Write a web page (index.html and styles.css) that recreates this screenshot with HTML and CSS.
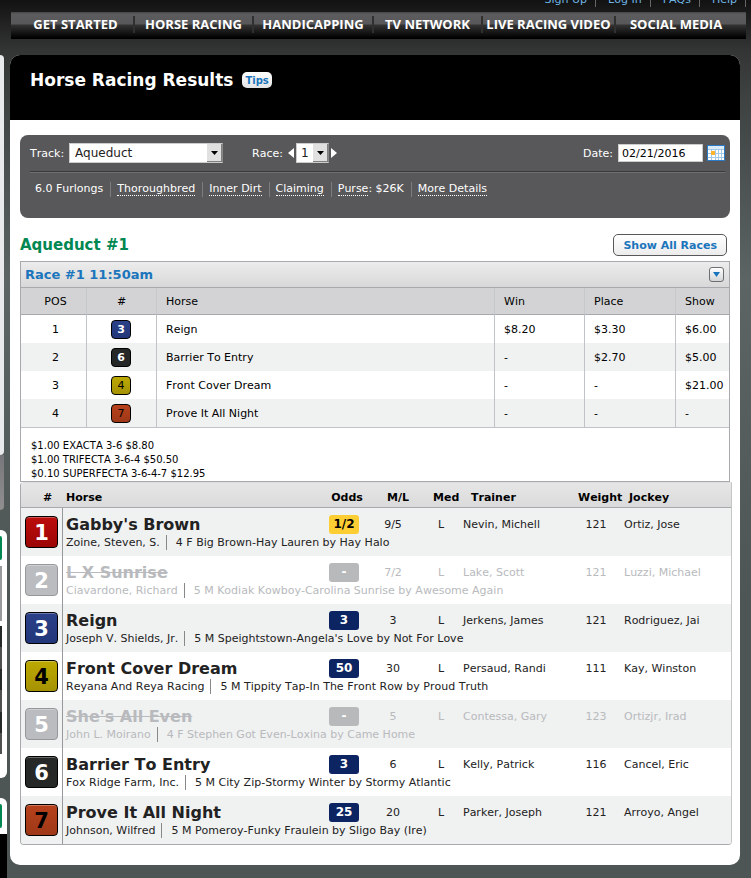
FILE: index.html
```
<!doctype html>
<html lang="en">
<head>
<meta charset="utf-8">
<title>Horse Racing Results</title>
<link rel="stylesheet" href="styles.css">
</head>
<body>
<div class="topLinks">
	<a href="#">Sign Up</a>
	<a href="#">Log In</a>
	<a href="#">FAQs</a>
	<a href="#">Help</a>
</div>

<nav class="nav">
	<a href="#">GET STARTED</a>
	<a href="#">HORSE RACING</a>
	<a href="#">HANDICAPPING</a>
	<a href="#">TV NETWORK</a>
	<a href="#">LIVE RACING VIDEO</a>
	<a href="#">SOCIAL MEDIA</a>
</nav>

<div class="page">
	<div class="side">
		<div class="sideMenu"></div>
		<div class="sideFoot"></div>
		<div class="sideBox">
			<div class="sideHead"></div>
			<div class="sideImage"></div>
			<div class="sideList"></div>
		</div>
		<div class="sideBox sideBoxLast">
			<div class="sideHead"></div>
			<div class="sideVideo"></div>
		</div>
	</div>

	<main class="mainDiv">
		<div class="mainHead">
			<h1>Horse Racing Results</h1>
			<button type="button" class="tips">Tips</button>
		</div>

		<div class="mainBody">
			<form class="filter" name="FilterForm">
				<div class="fields">
					<label for="track">Track:</label>
					<select id="track" name="track" class="select trackSelect">
						<option>Aqueduct</option>
					</select>
					<label for="race" class="raceLabel">Race:</label>
					<button type="button" class="arrow prev" aria-label="Previous race"></button>
					<select id="race" name="race" class="select raceSelect">
						<option>1</option>
					</select>
					<button type="button" class="arrow next" aria-label="Next race"></button>
					<label for="date" class="dateLabel">Date:</label>
					<input type="text" id="date" name="date" class="date" value="02/21/2016">
					<button type="button" class="calendar" aria-label="Calendar">
						<svg width="18" height="16" viewBox="0 0 18 16">
							<rect width="18" height="16" fill="#2a7cc8"/>
							<rect x="1" y="1" width="16" height="3" fill="#dcebf8"/>
							<rect x="1" y="4" width="16" height="11" fill="#fff"/>
							<path d="M1 4.500H17M1 8.500H17M1 12.500H17M4.500 4V15M8.500 4V15M11.500 4V15M14.500 4V15" stroke="#a3c8e8"/>
							<rect x="4" y="6" width="4" height="4" fill="#fcb52b"/>
						</svg>
					</button>
				</div>
				<ul class="details">
					<li>6.0 Furlongs</li>
					<li><a href="#">Thoroughbred</a></li>
					<li><a href="#">Inner Dirt</a></li>
					<li><a href="#">Claiming</a></li>
					<li><a href="#">Purse</a>: $26K</li>
					<li><a href="#">More Details</a></li>
				</ul>
			</form>

			<div class="raceHead">
				<h2>Aqueduct #1</h2>
				<button type="button" class="showAll">Show All Races</button>
			</div>

			<section class="results">
				<div class="resultsTitle">
					<h3>Race #1 11:50am</h3>
					<button type="button" class="toggle" aria-label="Hide race">
						<svg width="7" height="5" viewBox="0 0 7 5"><path d="M0 0H7L3.500 5Z" fill="#1b75bc"/></svg>
					</button>
				</div>
				<table class="resultsTable">
					<thead>
						<tr>
							<th class="pos">POS</th>
							<th class="num">#</th>
							<th>Horse</th>
							<th class="win">Win</th>
							<th class="place">Place</th>
							<th class="show">Show</th>
						</tr>
					</thead>
					<tbody>
						<tr>
							<td class="pos">1</td>
							<td class="num"><span class="saddle blue">3</span></td>
							<td>Reign</td>
							<td>$8.20</td>
							<td>$3.30</td>
							<td>$6.00</td>
						</tr>
						<tr>
							<td class="pos">2</td>
							<td class="num"><span class="saddle black">6</span></td>
							<td>Barrier To Entry</td>
							<td>-</td>
							<td>$2.70</td>
							<td>$5.00</td>
						</tr>
						<tr>
							<td class="pos">3</td>
							<td class="num"><span class="saddle yellow">4</span></td>
							<td>Front Cover Dream</td>
							<td>-</td>
							<td>-</td>
							<td>$21.00</td>
						</tr>
						<tr>
							<td class="pos">4</td>
							<td class="num"><span class="saddle orange">7</span></td>
							<td>Prove It All Night</td>
							<td>-</td>
							<td>-</td>
							<td>-</td>
						</tr>
					</tbody>
				</table>
				<ul class="payouts">
					<li>$1.00 EXACTA 3-6 $8.80</li>
					<li>$1.00 TRIFECTA 3-6-4 $50.50</li>
					<li>$0.10 SUPERFECTA 3-6-4-7 $12.95</li>
				</ul>
			</section>

			<div class="entries">
				<table class="entriesTable">
					<thead>
						<tr>
							<th class="no">#</th>
							<th class="name">Horse</th>
							<th class="odds">Odds</th>
							<th class="ml">M/L</th>
							<th class="med">Med</th>
							<th class="trainer">Trainer</th>
							<th class="weight">Weight</th>
							<th class="jockey">Jockey</th>
						</tr>
					</thead>
					<tbody>
						<tr class="entry">
							<td class="no" rowspan="2"><span class="saddle big red">1</span></td>
							<td class="name">Gabby's Brown</td>
							<td class="odds"><span class="badge favorite">1/2</span></td>
							<td class="ml">9/5</td>
							<td class="med">L</td>
							<td class="trainer">Nevin, Michell</td>
							<td class="weight">121</td>
							<td class="jockey">Ortiz, Jose</td>
						</tr>
						<tr class="info">
							<td colspan="7"><span class="owner">Zoine, Steven, S.</span>4 F Big Brown-Hay Lauren by Hay Halo</td>
						</tr>
					</tbody>
					<tbody class="scratched">
						<tr class="entry">
							<td class="no" rowspan="2"><span class="saddle big gray">2</span></td>
							<td class="name">L X Sunrise</td>
							<td class="odds"><span class="badge">-</span></td>
							<td class="ml">7/2</td>
							<td class="med">L</td>
							<td class="trainer">Lake, Scott</td>
							<td class="weight">121</td>
							<td class="jockey">Luzzi, Michael</td>
						</tr>
						<tr class="info">
							<td colspan="7"><span class="owner">Ciavardone, Richard</span>5 M Kodiak Kowboy-Carolina Sunrise by Awesome Again</td>
						</tr>
					</tbody>
					<tbody>
						<tr class="entry">
							<td class="no" rowspan="2"><span class="saddle big blue">3</span></td>
							<td class="name">Reign</td>
							<td class="odds"><span class="badge">3</span></td>
							<td class="ml">3</td>
							<td class="med">L</td>
							<td class="trainer">Jerkens, James</td>
							<td class="weight">121</td>
							<td class="jockey">Rodriguez, Jai</td>
						</tr>
						<tr class="info">
							<td colspan="7"><span class="owner">Joseph V. Shields, Jr.</span>5 M Speightstown-Angela's Love by Not For Love</td>
						</tr>
					</tbody>
					<tbody>
						<tr class="entry">
							<td class="no" rowspan="2"><span class="saddle big yellow">4</span></td>
							<td class="name">Front Cover Dream</td>
							<td class="odds"><span class="badge">50</span></td>
							<td class="ml">30</td>
							<td class="med">L</td>
							<td class="trainer">Persaud, Randi</td>
							<td class="weight">111</td>
							<td class="jockey">Kay, Winston</td>
						</tr>
						<tr class="info">
							<td colspan="7"><span class="owner">Reyana And Reya Racing</span>5 M Tippity Tap-In The Front Row by Proud Truth</td>
						</tr>
					</tbody>
					<tbody class="scratched">
						<tr class="entry">
							<td class="no" rowspan="2"><span class="saddle big gray">5</span></td>
							<td class="name">She's All Even</td>
							<td class="odds"><span class="badge">-</span></td>
							<td class="ml">5</td>
							<td class="med">L</td>
							<td class="trainer">Contessa, Gary</td>
							<td class="weight">123</td>
							<td class="jockey">Ortizjr, Irad</td>
						</tr>
						<tr class="info">
							<td colspan="7"><span class="owner">John L. Moirano</span>4 F Stephen Got Even-Loxina by Came Home</td>
						</tr>
					</tbody>
					<tbody>
						<tr class="entry">
							<td class="no" rowspan="2"><span class="saddle big black">6</span></td>
							<td class="name">Barrier To Entry</td>
							<td class="odds"><span class="badge">3</span></td>
							<td class="ml">6</td>
							<td class="med">L</td>
							<td class="trainer">Kelly, Patrick</td>
							<td class="weight">116</td>
							<td class="jockey">Cancel, Eric</td>
						</tr>
						<tr class="info">
							<td colspan="7"><span class="owner">Fox Ridge Farm, Inc.</span>5 M City Zip-Stormy Winter by Stormy Atlantic</td>
						</tr>
					</tbody>
					<tbody>
						<tr class="entry">
							<td class="no" rowspan="2"><span class="saddle big orange">7</span></td>
							<td class="name">Prove It All Night</td>
							<td class="odds"><span class="badge">25</span></td>
							<td class="ml">20</td>
							<td class="med">L</td>
							<td class="trainer">Parker, Joseph</td>
							<td class="weight">121</td>
							<td class="jockey">Arroyo, Angel</td>
						</tr>
						<tr class="info">
							<td colspan="7"><span class="owner">Johnson, Wilfred</span>5 M Pomeroy-Funky Fraulein by Sligo Bay (Ire)</td>
						</tr>
					</tbody>
				</table>
			</div>
		</div>
	</main>
</div>
</body>
</html>
```
FILE: styles.css
```
* {
	box-sizing: border-box;
}
body {
	margin: 0;
	background: #4d5655 linear-gradient(#121212, #333534 50px, #3e4342 100px, #5c6564 280px, #4d5655 600px) no-repeat;
	color: #000;
	font-family: Verdana, "DejaVu Sans", sans-serif;
	font-size: 11px;
	font-kerning: none;
}
h1, h2, h3, ul {
	margin: 0;
	padding: 0;
}
ul {
	list-style: none;
}
button {
	padding: 0;
	font-family: inherit;
	cursor: pointer;
}

/* top links, the bar is scrolled mostly out of view */
.topLinks {
	display: flex;
	justify-content: flex-end;
	align-items: flex-end;
	height: 12px;
	padding: 0 5px 5px 0;
	overflow: hidden;
}
.topLinks a {
	padding: 0 8px 0 12px;
	border-right: 1px solid #666;
	color: #6fb4e4;
	line-height: 14px;
	text-decoration: none;
}

/* navigation */
.nav {
	display: grid;
	grid-template-columns: 117fr 119fr 120fr 109fr 133fr 120fr;
	margin: 0 5px 16px 11px;
	padding: 0 10px 0 7px;
	background: linear-gradient(#444, #5c5c5e 2px, #58585a 12px, #333 13px, #000 26px);
}
.nav a {
	margin: 4px 0 6px;
	border-right: 2px solid #303030;
	color: #fff;
	font-family: "Open Sans", sans-serif;
	font-size: 13px;
	font-weight: bold;
	line-height: 17px;
	text-align: center;
	text-decoration: none;
	white-space: nowrap;
}
.nav a:last-child {
	border-right: 0;
}

.page {
	display: grid;
	grid-template-columns: 7px 1fr;
	column-gap: 3px;
	padding-right: 11px;
}

/* left column */
.side {
	display: flex;
	flex-direction: column;
}
.sideMenu {
	width: 4px;
	height: 400px;
	border-radius: 0 4px 4px 0;
	background: #e8eaec;
}
.sideFoot {
	width: 4px;
	height: 55px;
	margin-bottom: 20px;
	border-radius: 0 0 4px 0;
	background: linear-gradient(#77767a, #918f90);
}
.sideBox {
	height: 248px;
	margin-bottom: 20px;
	padding: 6px 0;
	border-radius: 0 6px 6px 0;
	background: #fff;
}
.sideHead {
	width: 2px;
	height: 24px;
	margin-bottom: 6px;
	border-radius: 0 3px 3px 0;
	background: #008752;
}
.sideImage {
	width: 2px;
	height: 55px;
	margin-bottom: 5px;
	background: #9a999e;
}
.sideList {
	width: 2px;
	height: 128px;
	background: repeating-linear-gradient(#252a29 0 21px, #505050 21px 43px);
}
.sideBoxLast {
	height: 80px;
	margin-bottom: 0;
	padding-bottom: 0;
	border-radius: 0 6px 0 0;
}
.sideVideo {
	height: 44px;
	background: #000;
}

/* main panel */
.mainDiv {
	margin-bottom: 13px;
	border-radius: 10px;
	background: #fff;
	overflow: hidden;
}
.mainHead {
	display: flex;
	align-items: flex-start;
	gap: 9px;
	height: 65px;
	padding: 14px 20px 0;
	background: #000;
}
h1 {
	color: #fff;
	font-size: 17px;
	line-height: 22px;
}
.tips {
	height: 16px;
	margin-top: 3px;
	padding: 0 3px;
	border: 0;
	border-radius: 5px;
	background: linear-gradient(#fff, #e2e3e4);
	color: #1b75bc;
	font-size: 10px;
	font-weight: bold;
}
.mainBody {
	padding: 15px 8px 20px 10px;
}

/* filter */
.filter {
	margin-right: 2px;
	padding: 8px 5px 21px 10px;
	border-radius: 8px;
	background: #58585a;
	color: #fff;
}
.fields {
	display: flex;
	align-items: center;
	height: 29px;
	padding-bottom: 8px;
	border-bottom: 1px solid #3a3a3b;
}
.select {
	height: 20px;
	margin: 0;
	padding: 0 18px 0 5px;
	border: 1px solid #ccc;
	border-right-color: #888;
	border-radius: 0;
	background: #fff url("data:image/svg+xml,%3Csvg xmlns='http://www.w3.org/2000/svg' width='15' height='18'%3E%3Cpath d='M0 0H15V18H0Z' fill='%23808080'/%3E%3Cpath d='M0 0H14V17H0Z' fill='%23e0e0e0'/%3E%3Cpath d='M4 7H11L7.500 11Z'/%3E%3C/svg%3E") no-repeat right top;
	color: #222;
	font-family: inherit;
	font-size: 12px;
	appearance: none;
}
.trackSelect {
	width: 154px;
	margin-left: 5px;
}
.raceLabel {
	margin-left: 29px;
}
.raceSelect {
	width: 33px;
	padding-left: 4px;
}
.arrow {
	width: 6px;
	height: 10px;
	border: 0;
	background: #fff;
}
.prev {
	margin: 0 2px 0 5px;
	clip-path: polygon(100% 0, 100% 100%, 0 50%);
}
.next {
	margin-left: 2px;
	clip-path: polygon(0 0, 100% 50%, 0 100%);
}
.dateLabel {
	margin-left: auto;
}
.date {
	width: 85px;
	height: 18px;
	margin: 0 4px 0 5px;
	padding: 0 3px;
	border: 1px solid #ccc;
	background: #fff;
	color: #000;
	font-family: inherit;
	font-size: 11px;
}
.calendar {
	height: 16px;
	border: 0;
	background: none;
}
.calendar svg {
	display: block;
}
.details {
	display: flex;
	padding: 9px 0 0 5px;
	border-top: 1px solid #707072;
}
.details li {
	height: 15px;
	margin-right: 6px;
	padding-right: 7px;
	border-right: 1px solid #7c7c7e;
	line-height: 13px;
}
.details li:last-child {
	border-right: 0;
}
.details a {
	display: inline-block;
	border-bottom: 1px dotted #fff;
	color: #fff;
	text-decoration: none;
}

.raceHead {
	display: flex;
	justify-content: space-between;
	align-items: center;
	padding: 16px 5px 5px 0;
}
h2 {
	color: #008752;
	font-size: 15px;
	line-height: 18px;
}
.showAll {
	height: 22px;
	padding: 0 9px;
	border: 1px solid #58585a;
	border-radius: 5px;
	background: linear-gradient(#fff, #ececec);
	color: #1b75bc;
	font-size: 11px;
	font-weight: bold;
}

/* saddle cloth numbers */
.saddle {
	display: block;
	width: 20px;
	height: 19px;
	margin: 0 auto;
	border: 1px solid #000;
	border-radius: 4px;
	color: #fff;
	font-size: 11px;
	font-weight: bold;
	line-height: 17px;
	text-align: center;
}
.big {
	width: 33px;
	height: 32px;
	font-size: 21px;
	line-height: 32px;
	box-shadow: inset 0 1px rgba(255, 255, 255, 0.3);
}
.red {
	background: linear-gradient(#bb0d0b, #9c0606);
}
.blue {
	background: linear-gradient(#2a4088, #22377a);
}
.black {
	background: #262727;
}
.yellow {
	background: linear-gradient(#bca900, #a59203);
	color: #000;
}
.orange {
	background: linear-gradient(#b6411c, #9f3817);
	color: #000;
}
.gray {
	border-color: #97989b;
	background: #bbbcc0;
}
.resultsTable .yellow, .resultsTable .orange {
	font-weight: normal;
}

/* results */
.results {
	margin-right: 2px;
	border: 1px solid #a7a9ac;
}
.resultsTitle {
	display: flex;
	justify-content: space-between;
	align-items: center;
	height: 26px;
	padding: 0 5px 0 4px;
	border-bottom: 1px solid #a7a9ac;
	background: linear-gradient(#ececec, #d8d8d8);
}
h3 {
	color: #1b75bc;
	font-size: 13px;
}
.toggle {
	display: flex;
	justify-content: center;
	align-items: center;
	width: 15px;
	height: 15px;
	border: 1px solid #6d6e71;
	border-radius: 3px;
	background: linear-gradient(#fff, #d4d5d6);
}
.resultsTable, .entriesTable {
	width: 100%;
	border-collapse: separate;
	border-spacing: 0;
	table-layout: fixed;
}
.resultsTable th {
	height: 27px;
	padding: 1px 9px 0;
	border-right: 1px solid #c5c9cc;
	border-bottom: 1px solid #a7a9ac;
	background: #d3d3d5;
	font-weight: normal;
	text-align: left;
}
.resultsTable td {
	height: 28px;
	padding: 1px 9px 0;
	border-right: 1px solid #c0c4c8;
}
.resultsTable .pos {
	padding: 1px 0 0 4px;
	text-align: center;
}
.resultsTable .num {
	padding: 1px 0 0;
	text-align: center;
}
.resultsTable td.num {
	padding: 0 1px 0 0;
}
.resultsTable th:last-child, .resultsTable td:last-child {
	padding-right: 0;
	border-right: 0;
}
.resultsTable tbody tr:nth-child(even) {
	background: #f0f1f1;
}
.resultsTable th.pos {
	width: 66px;
}
.resultsTable th.num {
	width: 70px;
}
.resultsTable th.win {
	width: 90px;
}
.resultsTable th.place {
	width: 91px;
}
.resultsTable th.show {
	width: 53px;
}
.payouts {
	padding: 11px 10px 0;
	border-top: 1px solid #c0c4c8;
	font-size: 10px;
	line-height: 14px;
}

/* entries */
.entries {
	border: 1px solid #a7a9ac;
	border-top-color: #dcdcdc;
	border-right-color: #c5c6c8;
	border-radius: 4px 0 4px 4px;
	overflow: hidden;
}
.entriesTable th {
	height: 25px;
	padding: 4px 0 0;
	border-bottom: 1px solid #a7a9ac;
	background: linear-gradient(#e6e6e6, #dadada);
	text-align: left;
}
.entriesTable td {
	padding: 0;
}
.entriesTable tbody {
	color: #222;
}
.entriesTable tbody:nth-child(even) {
	background: #f0f1f1;
}
.entry {
	height: 27px;
}
.entry td {
	padding-top: 5px;
}
.info {
	height: 21px;
	line-height: 15px;
	white-space: nowrap;
}
.info td {
	padding-left: 3px;
	vertical-align: top;
}
.owner {
	display: inline-block;
	margin-right: 9px;
	padding-right: 6px;
	border-right: 1px solid #888;
}
.entriesTable .no {
	width: 42px;
}
.entriesTable th.no {
	padding-left: 22px;
}
.entriesTable td.no {
	padding: 0;
	border-right: 1px solid #97989b;
}
.entriesTable .name {
	padding-left: 3px;
}
.entriesTable td.name {
	font-size: 16px;
	font-weight: bold;
}
.entriesTable .odds {
	width: 38px;
	text-align: center;
}
.entriesTable .ml {
	width: 60px;
	text-align: center;
}
.entriesTable .med {
	width: 36px;
	text-align: center;
}
.entriesTable th.odds, .entriesTable th.weight {
	padding-left: 6px;
}
.entriesTable th.ml, .entriesTable th.med {
	padding-left: 10px;
}
.entriesTable .trainer {
	width: 113px;
	padding-left: 4px;
}
.entriesTable th.trainer {
	padding-left: 12px;
}
.entriesTable .weight {
	width: 48px;
	text-align: center;
}
.entriesTable .jockey {
	width: 111px;
	padding-left: 4px;
}
.entriesTable th.jockey {
	padding-left: 9px;
}
.badge {
	display: block;
	width: 30px;
	height: 19px;
	margin: 0 auto;
	border-radius: 3px;
	background: #0c2461;
	color: #fff;
	font-size: 12px;
	font-weight: bold;
	line-height: 19px;
}
.favorite {
	background: #fdce34;
	color: #000;
}
.entriesTable tbody.scratched {
	color: #b8babd;
}
.scratched .name {
	text-decoration: line-through;
}
.scratched .badge {
	background: #b8b9bb;
}
```
